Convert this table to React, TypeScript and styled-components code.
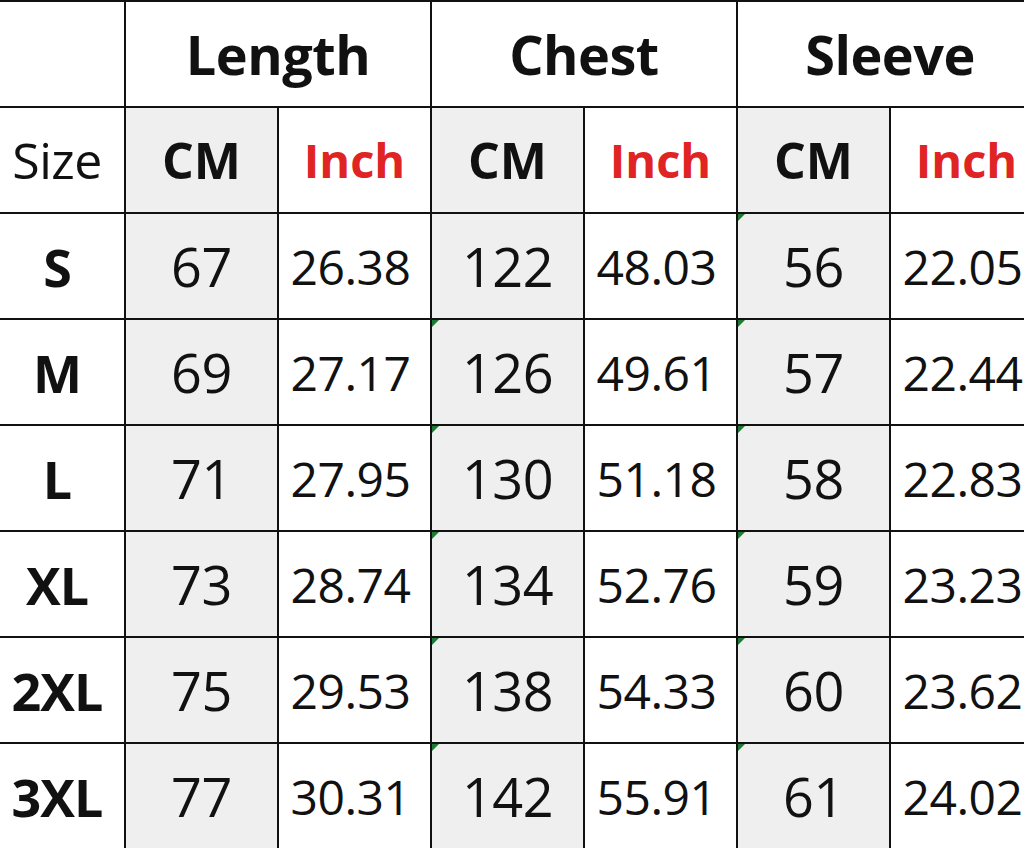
import React from "react";
import styled, { createGlobalStyle } from "styled-components";

const GlobalStyle = createGlobalStyle`
  html, body {
    margin: 0;
    padding: 0;
    background: #ffffff;
    overflow: hidden;
  }
  body {
    font-family: "Open Sans", "Noto Sans", "Liberation Sans", sans-serif;
    color: #111111;
  }
`;

interface Row {
  size: string;
  length: [string, string];
  chest: [string, string];
  sleeve: [string, string];
}

const rows: Row[] = [
  { size: "S", length: ["67", "26.38"], chest: ["122", "48.03"], sleeve: ["56", "22.05"] },
  { size: "M", length: ["69", "27.17"], chest: ["126", "49.61"], sleeve: ["57", "22.44"] },
  { size: "L", length: ["71", "27.95"], chest: ["130", "51.18"], sleeve: ["58", "22.83"] },
  { size: "XL", length: ["73", "28.74"], chest: ["134", "52.76"], sleeve: ["59", "23.23"] },
  { size: "2XL", length: ["75", "29.53"], chest: ["138", "54.33"], sleeve: ["60", "23.62"] },
  { size: "3XL", length: ["77", "30.31"], chest: ["142", "55.91"], sleeve: ["61", "24.02"] },
];

const App: React.FC = () => {
  return (
    <>
      <GlobalStyle />
      <Sheet>
        <Grid>
          <Cell />
          <GroupHead $span={2}>Length</GroupHead>
          <GroupHead $span={2}>Chest</GroupHead>
          <GroupHead $span={2}>Sleeve</GroupHead>

          <SizeLabel>Size</SizeLabel>
          <UnitCm>CM</UnitCm>
          <UnitInch>Inch</UnitInch>
          <UnitCm>CM</UnitCm>
          <UnitInch>Inch</UnitInch>
          <UnitCm>CM</UnitCm>
          <UnitInch>Inch</UnitInch>

          {rows.map((row, i) => (
            <React.Fragment key={row.size}>
              <SizeName>{row.size}</SizeName>
              <CmValue>{row.length[0]}</CmValue>
              <InchValue>{row.length[1]}</InchValue>
              <CmValue $flag={i > 0}>{row.chest[0]}</CmValue>
              <InchValue>{row.chest[1]}</InchValue>
              <CmValue $flag>{row.sleeve[0]}</CmValue>
              <InchValue>{row.sleeve[1]}</InchValue>
            </React.Fragment>
          ))}
        </Grid>
      </Sheet>
    </>
  );
};

export default App;

const Sheet = styled.div`
  width: 1024px;
  height: 848px;
  overflow: hidden;
`;

const Grid = styled.div`
  display: grid;
  grid-template-columns: 126px repeat(6, 153px);
  grid-auto-rows: 106px;
  width: 1044px;
  border-top: 2px solid #111;
  box-sizing: border-box;
`;

const Cell = styled.div<{ $span?: number }>`
  position: relative;
  box-sizing: border-box;
  display: flex;
  align-items: center;
  justify-content: center;
  border-right: 2px solid #111;
  border-bottom: 2px solid #111;
  grid-column: span ${(p) => p.$span ?? 1};
  white-space: nowrap;
`;

const GroupHead = styled(Cell)`
  font-size: 54px;
  font-weight: 700;
  letter-spacing: -0.5px;
`;

const SizeLabel = styled(Cell)`
  font-size: 50px;
  font-weight: 400;
  padding-right: 10px;
  letter-spacing: -0.5px;
`;

const SizeName = styled(Cell)`
  font-size: 52px;
  font-weight: 700;
  padding-right: 10px;
  letter-spacing: -1px;
`;

const UnitCm = styled(Cell)`
  background: #efefef;
  font-size: 50px;
  font-weight: 700;
`;

const UnitInch = styled(Cell)`
  color: #e02424;
  font-size: 47px;
  font-weight: 700;
`;

const CmValue = styled(Cell)<{ $flag?: boolean }>`
  background: #efefef;
  font-size: 54px;
  font-weight: 400;
  letter-spacing: -0.5px;

  &::before {
    content: "";
    display: ${(p) => (p.$flag ? "block" : "none")};
    position: absolute;
    top: 0;
    left: 0;
    width: 0;
    height: 0;
    border-top: 7px solid #1e7a34;
    border-right: 7px solid transparent;
  }
`;

const InchValue = styled(Cell)`
  font-size: 48px;
  font-weight: 400;
  letter-spacing: -0.5px;
  padding-right: 8px;
`;
